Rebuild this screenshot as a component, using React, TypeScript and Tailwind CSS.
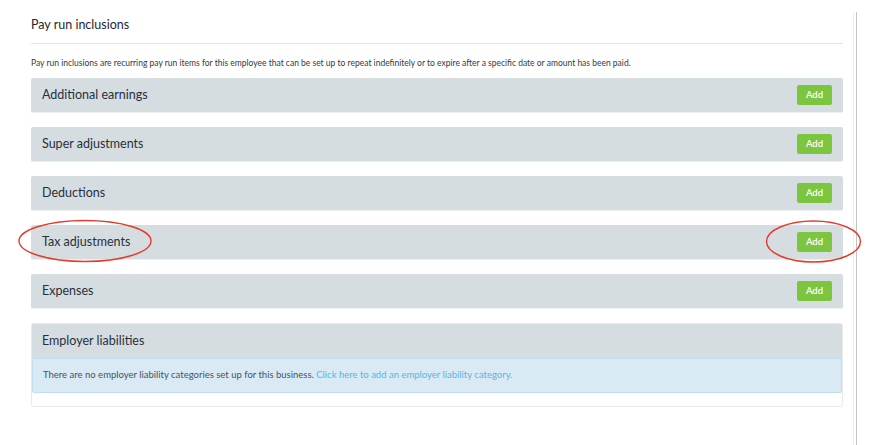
import React from 'react';

const sections = [
  'Additional earnings',
  'Super adjustments',
  'Deductions',
  'Tax adjustments',
  'Expenses',
];

const font = { fontFamily: 'Lato, "Open Sans", Arial, sans-serif' };

const App = () => {
  return (
    <div
      className="relative w-[890px] h-[445px] bg-white overflow-hidden text-[#2b3340]"
      style={font}
    >
      <div className="flex">
        <div className="w-[843px] pl-[31px] pt-[17px]">
          <div className="text-[12.5px] leading-[16px] text-[#1f2730]">Pay run inclusions</div>
          <div className="mt-[10px] border-t border-[#e4e6e8]" />
          <p className="mt-[14px] text-[8.5px] leading-[11px] text-[#333a44]">
            Pay run inclusions are recurring pay run items for this employee that can be set up
            to repeat indefinitely or to expire after a specific date or amount has been paid.
          </p>

          <div className="mt-[9px] flex flex-col gap-[14px]">
            {sections.map((title) => (
              <div
                key={title}
                className="h-[35px] rounded-[2px] bg-[#d6dde0] border-b border-[#eceef0] pl-[11px] pr-[11px] flex items-center justify-between"
              >
                <span className="text-[12.5px] text-[#27303d]">{title}</span>
                <button className="w-[35px] h-[20px] rounded-[2px] bg-[#7cc53f] text-white text-[9.5px] font-semibold leading-none">
                  Add
                </button>
              </div>
            ))}

            {/* panel with an empty-state notice */}
            <div className="rounded-[3px] border border-[#e7e9eb]">
              <div className="h-[34px] bg-[#d6dde0] pl-[10px] flex items-center">
                <span className="text-[12.5px] text-[#27303d]">Employer liabilities</span>
              </div>
              <div className="h-[35px] bg-[#d9eaf5] border border-[#c0e0f0] rounded-b-[2px] pl-[10px] flex items-center text-[9.5px] text-[#3e5566]">
                <span>
                  There are no employer liability categories set up for this business.{' '}
                  <a className="text-[#55b6e6]">Click here to add an employer liability category.</a>
                </span>
              </div>
              <div className="h-[13px]" />
            </div>
          </div>
        </div>

        {/* scroll edge */}
        <div className="ml-[10px] mt-[12px] flex h-[433px]">
          <div className="w-px bg-[#eeeeee]" />
          <div className="ml-[2px] w-px bg-[#c4c4c4]" />
        </div>
      </div>

      {/* hand-drawn highlight marks */}
      <svg className="absolute left-0 top-0 pointer-events-none" width="890" height="445">
        <ellipse cx="85" cy="241" rx="66" ry="20.5" fill="none" stroke="#e33b2b" strokeWidth="1.4" />
        <ellipse cx="813.5" cy="241.5" rx="47" ry="20.5" fill="none" stroke="#e33b2b" strokeWidth="1.4" />
      </svg>
    </div>
  );
};

export default App;
